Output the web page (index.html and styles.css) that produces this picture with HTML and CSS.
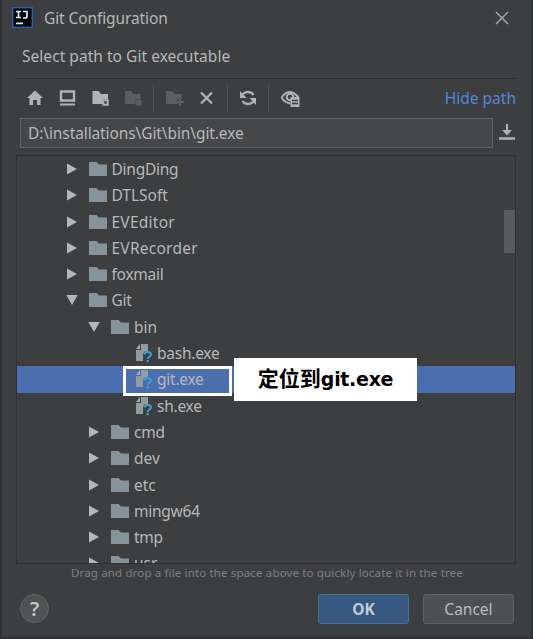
FILE: index.html
```html
<!DOCTYPE html>
<html lang="en">
<head>
<meta charset="utf-8">
<title>Git Configuration</title>
<link rel="stylesheet" href="styles.css">
</head>
<body>
<svg class="defs" width="0" height="0">
  <symbol id="folder" viewBox="0 0 18 14"><path d="M0 0h7.500l2.500 2.500H18V14H0z" fill="#87939a"/></symbol>
  <symbol id="right" viewBox="0 0 11 12"><path d="M0.500 0.500L10.500 6L0.500 11.500z" fill="#b4b6b8"/></symbol>
  <symbol id="down" viewBox="0 0 12 11"><path d="M0.300 0.500H11.700L6 10.500z" fill="#b4b6b8"/></symbol>
  <symbol id="file" viewBox="0 0 18 20">
    <path d="M6 1h7v7.500H9.500L8 11v7H1V7h5z" fill="#929b9f"/><path d="M5 1v5H1z" fill="#a6adb0"/>
    <path d="M9.500 11.500c0-3.500 6.500-3.500 6.500 0c0 2.200-3.300 2-3.300 4.500" fill="none" stroke="#3ba0cd" stroke-width="2"/><path d="M11.600 17h2.200v2.200h-2.200z" fill="#3ba0cd"/>
  </symbol>
</svg>
<main class="dialog">
  <header class="titlebar">
    <svg class="logo" width="21" height="21" viewBox="0 0 21 21"><rect x=".7" y=".7" width="19.600" height="19.600" fill="#05070a" stroke="#2263ad" stroke-width="1.400"/><path d="M4 4.500h5M6.500 4.500v6M4 10.500h5M11 4.500h4v4.500q0 2-2 2h-2M4 16.300h7" fill="none" stroke="#e8e8e8" stroke-width="1.700"/></svg>
    <h1 class="title">Git Configuration</h1>
    <svg class="close" width="14" height="14" viewBox="0 0 14 14"><path d="M1 1l12 12M13 1L1 13" stroke="#a9abad" stroke-width="1.400"/></svg>
  </header>
  <p class="subtitle">Select path to Git executable</p>
  <nav class="toolbar">
    <svg width="300" height="26" viewBox="0 0 300 26" fill="#b0b2b4">
      <path d="M7 13L15 5.500l8 7.500h-2.500v7H17v-5h-4v5H9.500v-7z"/>
      <path d="M41 6.500h13v9H41z" fill="none" stroke="#b0b2b4" stroke-width="2.400"/><path d="M40 18.500h15v2H40z"/>
      <path d="M72.500 6h6l2.500 3h7v5h-5v5H72.500z"/><path d="M83.300 15.300h4.400v4.400h-4.400z" fill="none" stroke="#b0b2b4" stroke-width="2"/>
      <g fill="#5b5d5f"><path d="M105 6h6l2.500 3h7v5h-5v5H105z"/><path d="M115.500 14.500h6v6h-6z"/>
      <path d="M146 6h6l2.500 3h7v5h-4v5H146z"/><path d="M159 13h2v3h3v2h-3v3h-2v-3h-3v-2h3z"/></g>
      <path d="M133.500 0v26M207.500 0v26M248.500 0v26" stroke="#515355"/>
      <path d="M181 7.500l11 11M192 7.500l-11 11" stroke="#b0b2b4" stroke-width="2.300"/>
      <path d="M221.500 12a6.500 6 0 0 1 12-2M234.500 14a6.500 6 0 0 1-12 2" fill="none" stroke="#b0b2b4" stroke-width="2.300"/><path d="M220 6v7h6.500zM236 20v-7h-6.500z"/>
      <path d="M261.500 12.500q8-11 17 0M261.500 12.500q3.500 5.500 9 6" fill="none" stroke="#b0b2b4" stroke-width="2"/><circle cx="270" cy="12" r="3.300" fill="none" stroke="#b0b2b4" stroke-width="2"/>
      <path d="M270.500 12h9v10h-9z"/><path d="M272 15.500h6M272 18.500h6" stroke="#3c3e40" stroke-width="1.300"/>
    </svg>
    <span class="hide">Hide path</span>
  </nav>
  <div class="pathrow">
    <div class="field"><span class="path">D:\installations\Git\bin\git.exe</span></div>
    <svg width="16" height="17" viewBox="0 0 16 17"><path d="M7 0h2v6h4l-5 5.500L3 6h4zM0 13.300h16v2.400H0z" fill="#b0b2b4"/></svg>
  </div>
  <section class="tree">
    <div class="row"><svg class="arrow"><use href="#right"/></svg><svg class="folder"><use href="#folder"/></svg><span class="tight">DingDing</span></div>
    <div class="row"><svg class="arrow"><use href="#right"/></svg><svg class="folder"><use href="#folder"/></svg><span>DTLSoft</span></div>
    <div class="row"><svg class="arrow"><use href="#right"/></svg><svg class="folder"><use href="#folder"/></svg><span class="loose">EVEditor</span></div>
    <div class="row"><svg class="arrow"><use href="#right"/></svg><svg class="folder"><use href="#folder"/></svg><span class="loose">EVRecorder</span></div>
    <div class="row"><svg class="arrow"><use href="#right"/></svg><svg class="folder"><use href="#folder"/></svg><span class="tight">foxmail</span></div>
    <div class="row"><svg class="arrow"><use href="#down"/></svg><svg class="folder"><use href="#folder"/></svg><span class="tight">Git</span></div>
    <div class="row level2"><svg class="arrow"><use href="#down"/></svg><svg class="folder"><use href="#folder"/></svg><span>bin</span></div>
    <div class="row level3"><svg class="file"><use href="#file"/></svg><span class="tight">bash.exe</span></div>
    <div class="row level3 selected"><svg class="file"><use href="#file"/></svg><span class="tight">git.exe</span><i class="frame"></i><b class="callout">定位到<span class="name">git.exe</span></b></div>
    <div class="row level3"><svg class="file"><use href="#file"/></svg><span class="tight">sh.exe</span></div>
    <div class="row level2"><svg class="arrow"><use href="#right"/></svg><svg class="folder"><use href="#folder"/></svg><span class="tight">cmd</span></div>
    <div class="row level2"><svg class="arrow"><use href="#right"/></svg><svg class="folder"><use href="#folder"/></svg><span>dev</span></div>
    <div class="row level2"><svg class="arrow"><use href="#right"/></svg><svg class="folder"><use href="#folder"/></svg><span>etc</span></div>
    <div class="row level2"><svg class="arrow"><use href="#right"/></svg><svg class="folder"><use href="#folder"/></svg><span class="tight">mingw64</span></div>
    <div class="row level2"><svg class="arrow"><use href="#right"/></svg><svg class="folder"><use href="#folder"/></svg><span class="tight">tmp</span></div>
    <div class="row level2"><svg class="arrow"><use href="#right"/></svg><svg class="folder"><use href="#folder"/></svg><span>usr</span></div>
    <i class="thumb"></i>
  </section>
  <p class="hint">Drag and drop a file into the space above to quickly locate it in the tree</p>
  <footer class="footer">
    <button class="help">?</button>
    <button class="btn ok">OK</button>
    <button class="btn cancel">Cancel</button>
  </footer>
</main>
</body>
</html>
```
FILE: styles.css
```css
* { box-sizing: border-box; }
body { margin: 0; background: #3c3e40; color: #b6b8ba; font: 15.5px "Noto Sans", "Noto Sans CJK SC", sans-serif; }
h1, p { margin: 0; font-weight: 400; }
svg { flex: none; display: block; }
.defs { position: absolute; }
.dialog { width: 533px; height: 639px; overflow: hidden; border: solid #2d2f31; border-width: 0 2px 2px; padding: 0 15px 0 14px; display: flex; flex-direction: column; }
.titlebar { height: 36px; display: flex; align-items: center; }
.logo { margin-left: -4px; }
.title { margin-left: 11px; font-size: 15.5px; letter-spacing: -.1px; }
.close { margin-left: auto; margin-right: 7px; }
.subtitle { height: 43px; line-height: 40px; padding-left: 6px; font-size: 15.5px; letter-spacing: .04px; }
.toolbar { border-top: 1px solid #2a2c2e; height: 40px; display: flex; align-items: center; justify-content: space-between; padding-left: 4px; }
.hide { color: #5488d6; }
.pathrow { height: 30px; display: flex; align-items: center; gap: 6px; padding-left: 4px; }
.field { width: 473px; height: 30px; border: 1px solid #626466; background: #454749; display: flex; align-items: center; padding-left: 7px; }
.path { letter-spacing: -.1px; }
.tree { position: relative; margin-top: 7px; height: 409px; width: 500px; overflow: hidden; border: 1px solid #2e3032; flex: none; padding-top: .2px; }
.row { position: relative; height: 26.3px; display: flex; align-items: center; padding-left: 48.5px; white-space: nowrap; }
.row > span { margin-left: 5px; line-height: 26px; }
.row > .tight { letter-spacing: -.25px; }
.row > .loose { letter-spacing: .25px; }
.level2 { padding-left: 71px; }
.level3 { padding-left: 118px; }
.arrow { width: 12px; height: 12px; }
.folder { width: 18px; height: 14px; margin-left: 11px; }
.file { width: 18px; height: 20px; }
.level3 > span { margin-left: 4px; }
.selected { background: #4b6eaf; z-index: 2; }
.frame { position: absolute; left: 106px; top: 0; width: 109px; height: 30px; border: 3px solid #fff; }
.callout { position: absolute; left: 217px; top: -8px; width: 183px; height: 43px; background: #fff; color: #000; font: bold 21px/43px "DejaVu Sans", "Noto Sans CJK SC", sans-serif; text-align: center; }
.name { font-size: 19px; letter-spacing: -.3px; }
.thumb { position: absolute; right: 0; top: 54px; width: 11px; height: 43px; background: #595b5d; }
.hint { height: 17px; line-height: 17px; padding-left: 55px; font-size: 11.5px; letter-spacing: .15px; color: #7c7e80; white-space: nowrap; }
.footer { display: flex; align-items: center; height: 57px; padding-left: 4px; }
.help { width: 29px; height: 29px; border-radius: 50%; border: 1px solid #606264; background: #505254; color: #c4c6c8; font: 600 20px/26px "Noto Sans", sans-serif; padding: 0; }
.btn { width: 91px; height: 30px; border-radius: 3px; color: #b8babc; font: 15.5px "Noto Sans", sans-serif; padding: 0; }
.ok { margin-left: auto; background: #365880; border: 1px solid #4c708c; color: #bfccd8; font-weight: 700; }
.cancel { margin-left: 14px; margin-right: 2px; background: #4c5052; border: 1px solid #5e6062; }
```
